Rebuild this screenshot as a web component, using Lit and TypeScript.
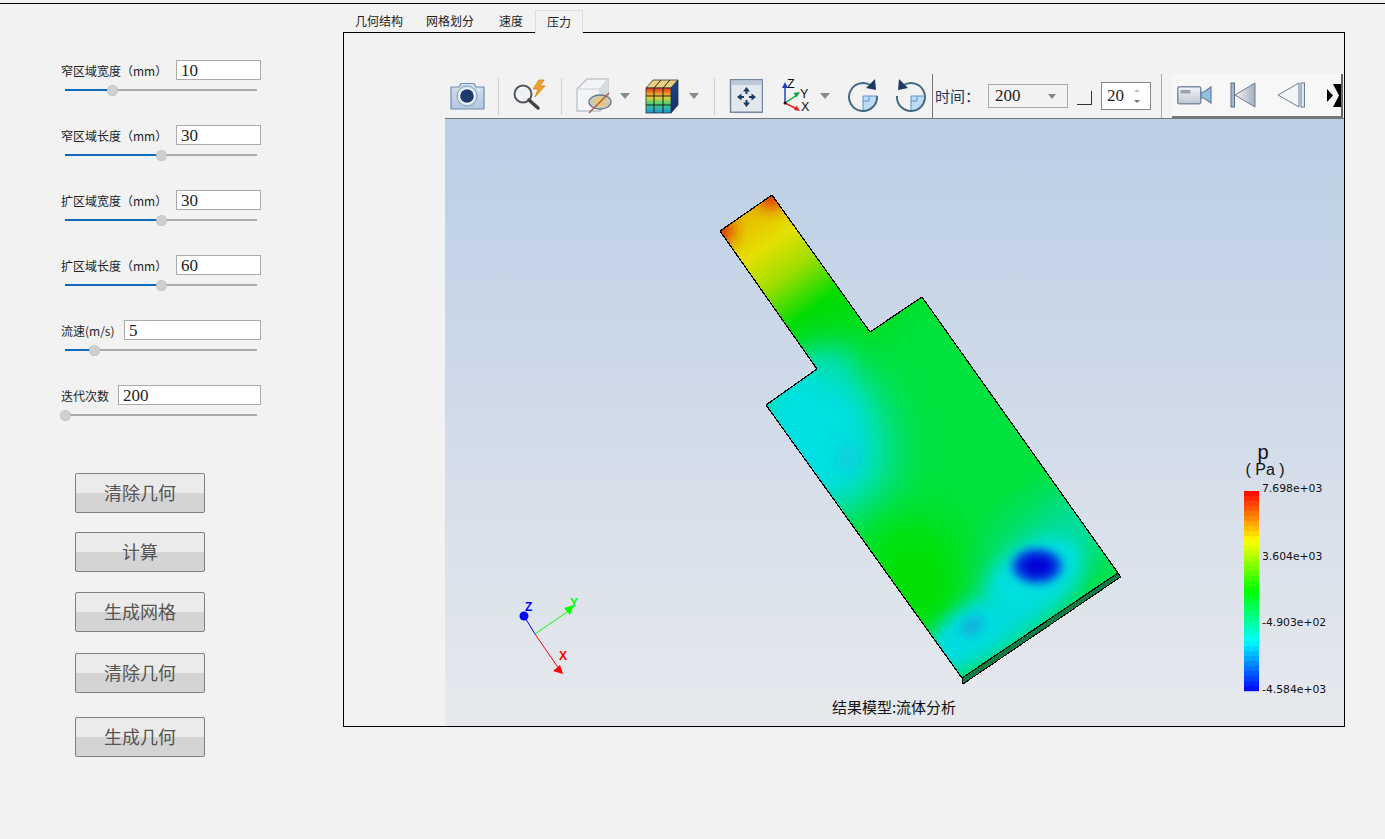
import { LitElement, html, css, svg } from 'lit';
import { customElement } from 'lit/decorators.js';

const rows = [
  { label: '窄区域宽度（mm）', labelW: 115, value: '10', pos: 24.5 },
  { label: '窄区域长度（mm）', labelW: 115, value: '30', pos: 50.5 },
  { label: '扩区域宽度（mm）', labelW: 115, value: '30', pos: 50.5 },
  { label: '扩区域长度（mm）', labelW: 115, value: '60', pos: 50.5 },
  { label: '流速(m/s)', labelW: 63, value: '5', pos: 15.6 },
  { label: '迭代次数', labelW: 57, value: '200', pos: 0.5 },
];

const buttons = ['清除几何', '计算', '生成网格', '清除几何', '生成几何'];
const tabs = ['几何结构', '网格划分', '速度', '压力'];

// outline of the model, in page pixels
const MODEL = '772,195 720,231 817,369 766,405 962,678 1118,573 922,297 870,332';

function rainbow(t: number) {
  const stops = [[255, 0, 0], [255, 255, 0], [0, 255, 0], [0, 255, 255], [0, 0, 255]];
  const p = Math.min(t * 4, 3.999);
  const i = Math.floor(p);
  const f = p - i;
  const c = stops[i].map((v, k) => Math.round(v + (stops[i + 1][k] - v) * f));
  return `rgb(${c[0]},${c[1]},${c[2]})`;
}

const bands = Array.from({ length: 40 }, (_, i) => i);

const ticks = [
  { text: '7.698e+03', y: 492 },
  { text: '3.604e+03', y: 560 },
  { text: '-4.903e+02', y: 626 },
  { text: '-4.584e+03', y: 693 },
];

const dropArrow = html`<svg class="drop" width="12" height="8" viewBox="0 0 12 8"><path d="M1 1h10L6 7z" fill="#8a8a8a" /></svg>`;

@customElement('app-root')
export class AppRoot extends LitElement {
  private renderRow(r: (typeof rows)[number]) {
    return html`
      <div class="row">
        <div class="field">
          <label style="width:${r.labelW}px">${r.label}</label>
          <input type="text" .value=${r.value} />
        </div>
        <div class="slider">
          <div class="fill" style="width:${r.pos}%"></div>
          <div class="thumb" style="left:${r.pos}%"></div>
        </div>
      </div>
    `;
  }

  private renderToolbar() {
    return html`
      <div class="toolbar">
        <svg class="i-cam" width="35" height="28" viewBox="0 0 35 28">
          <defs><linearGradient id="camg" x1="0" y1="0" x2="0" y2="1"><stop offset="0" stop-color="#d4e0ee" /><stop offset="1" stop-color="#b4c8e0" /></linearGradient></defs>
          <path d="M1 5h8l2-3.500h13l2 3.500h8v22h-33z" fill="url(#camg)" stroke="#6f8db2" stroke-width="1.200" stroke-linejoin="round" />
          <circle cx="17" cy="14" r="10" fill="#dfe8f2" stroke="#7f9abb" />
          <circle cx="17" cy="14" r="8" fill="#f2f6fa" />
          <circle cx="17" cy="14" r="6.800" fill="#1d3a6e" />
          <circle cx="29" cy="8" r="1" fill="#f4f7fb" />
        </svg>
        <span class="sep s1"></span>
        <svg class="i-mag" width="36" height="34" viewBox="0 0 36 34">
          <path d="M26 1l-6 9h5l-3 8 10-11h-5l4-6z" fill="#f0a030" stroke="#d98010" stroke-width=".8" />
          <circle cx="10" cy="15" r="8.500" fill="#eef2f6" stroke="#555" stroke-width="2" />
          <path d="M16 21l9 8" stroke="#444" stroke-width="3.500" stroke-linecap="round" />
        </svg>
        <span class="sep s2"></span>
        <svg class="i-cube" width="37" height="36" viewBox="0 0 37 36">
          <path d="M1 11L11 1h21v23L24 33H1z" fill="#f2f4f6" stroke="#c0c6cc" stroke-width="1.500" />
          <path d="M1 11h23v22M24 11l8-10" fill="none" stroke="#c8cdd2" stroke-width="1.200" />
          <path d="M32 1v23l-8 9V11z" fill="#d8dce0" />
          <ellipse cx="24" cy="24" rx="11" ry="7" fill="#c8ccc0" stroke="#6a7688" stroke-width="1.300" />
          <ellipse cx="24" cy="24" rx="6" ry="5" fill="#e8c878" />
          <path d="M13 35L33 15" stroke="#a8553a" stroke-width="1.300" />
        </svg>
        ${dropArrow}
        <svg class="i-rgb" width="34" height="35" viewBox="0 0 34 35">
          <defs>
            <linearGradient id="rgbf" x1="0" y1="0" x2="0" y2="1"><stop offset="0" stop-color="#e03020" /><stop offset=".35" stop-color="#f0d030" /><stop offset=".65" stop-color="#40d080" /><stop offset="1" stop-color="#2090e0" /></linearGradient>
            <linearGradient id="rgbs" x1="0" y1="0" x2="0" y2="1"><stop offset="0" stop-color="#104a90" /><stop offset="1" stop-color="#1c2c70" /></linearGradient>
          </defs>
          <path d="M1 9L8 1h25L26 9z" fill="#e8d080" stroke="#333" stroke-width=".8" />
          <path d="M26 9l7-8v25l-7 8z" fill="url(#rgbs)" stroke="#333" stroke-width=".8" />
          <rect x="1" y="9" width="25" height="25" fill="url(#rgbf)" stroke="#333" stroke-width=".8" />
          <path d="M9 9v25M18 9v25M1 17h25M1 26h25M9 9l7-8M18 9l7-8" stroke="#222" stroke-width="1" fill="none" />
        </svg>
        <svg class="drop d2" width="12" height="8" viewBox="0 0 12 8"><path d="M1 1h10L6 7z" fill="#8a8a8a" /></svg>
        <span class="sep s3"></span>
        <svg class="i-fit" width="34" height="34" viewBox="0 0 34 34">
          <rect x="1.500" y=".75" width="32" height="32.500" fill="#e3e7ee" stroke="#75869f" stroke-width="1.500" />
          <rect x="2.200" y="1.500" width="30.600" height="4.500" fill="#bcc8da" />
          <path d="M17.500 8l3.500 4.500h-2.500v2.500h-2v-2.500H14zM17.500 28l3.500-4.500h-2.500V21h-2v2.500H14zM8 18l4.500-3.500V17H15v2h-2.500v2.500zM27 18l-4.500-3.500V17H20v2h2.500v2.500z" fill="#1d3a62" />
        </svg>
        <svg class="i-axes" width="32" height="36" viewBox="0 0 32 36">
          <path d="M4 25V8" stroke="#2040c0" stroke-width="1.500" />
          <path d="M4 4l-3 6h6z" fill="#2040c0" />
          <path d="M4 25l12-8" stroke="#10a040" stroke-width="1.500" />
          <path d="M19 14l-6.500 1 3 4.500z" fill="#10a040" />
          <path d="M4 25l12 6" stroke="#e02020" stroke-width="1.500" />
          <path d="M19 33l-6-1 2.500-4.500z" fill="#e02020" />
          <circle cx="4" cy="25" r="1.500" fill="#111" />
          <text x="6" y="10" class="ax">Z</text>
          <text x="19" y="20" class="ax">Y</text>
          <text x="20" y="33" class="ax">X</text>
        </svg>
        ${dropArrow}
        <svg class="i-rot" width="32" height="34" viewBox="0 0 32 34">
          <path d="M16 17h14a14 14 0 0 1-14 14z" fill="#bcdcf4" />
          <path d="M24 6.500A14 14 0 1 0 30 17" fill="none" stroke="#446688" stroke-width="2" />
          <path d="M16 17h14M16 17v14M22 17v5h-6" fill="none" stroke="#5a94c8" stroke-width="1" />
          <path d="M28 0l1 11-10-2z" fill="#1d3a62" />
        </svg>
        <svg class="i-rot2" width="32" height="34" viewBox="0 0 32 34">
          <path d="M16 17h14a14 14 0 0 1-14 14z" fill="#bcdcf4" />
          <path d="M8 6.500A14 14 0 1 1 2 17" fill="none" stroke="#446688" stroke-width="2" />
          <path d="M16 17h14M16 17v14M22 17v5h-6" fill="none" stroke="#5a94c8" stroke-width="1" />
          <path d="M4 0l-1 11 10-2z" fill="#1d3a62" />
        </svg>
        <span class="sep dark"></span>
        <span class="time">时间：</span>
        <div class="combo"><span>200</span><svg width="8" height="5" viewBox="0 0 8 5"><path d="M0 0h8L4 5z" fill="#888" /></svg></div>
        <span class="check"></span>
        <div class="spin">
          <span>20</span>
          <svg width="8" height="16" viewBox="0 0 8 16"><path d="M1 4l3-3 3 3z" fill="#c4c4c4" /><path d="M1 12l3 3 3-3z" fill="#777" /></svg>
        </div>
        <span class="sep s4"></span>
        <div class="player">
          <svg class="p-video" width="36" height="20" viewBox="0 0 36 20">
            <defs><linearGradient id="vid" x1="0" y1="0" x2="0" y2="1"><stop offset="0" stop-color="#f4f5f7" /><stop offset="1" stop-color="#c0c8d2" /></linearGradient></defs>
            <rect x=".75" y="1.750" width="23" height="17" rx="2" fill="url(#vid)" stroke="#7c8da4" stroke-width="1.500" />
            <rect x="3.500" y="5" width="10" height="3.500" fill="#9ca2a8" />
            <path d="M24 7h3l7-5v16l-7-5h-3z" fill="#8cc4e0" stroke="#6a7c94" stroke-width="1.200" />
          </svg>
          <svg class="p-first" width="26" height="26" viewBox="0 0 26 26">
            <defs><linearGradient id="tri" x1="0" y1="0" x2="1" y2="0"><stop offset="0" stop-color="#f4f6f8" /><stop offset="1" stop-color="#a4afbc" /></linearGradient></defs>
            <rect x="1" y="1" width="3.500" height="24" fill="#a8b8cc" stroke="#5a6e8c" />
            <path d="M25 1v24L5 13z" fill="url(#tri)" stroke="#6a7c94" />
          </svg>
          <svg class="p-prev" width="29" height="26" viewBox="0 0 29 26">
            <path d="M22 1v24L1 13z" fill="#f2f4f6" stroke="#6a7c94" />
            <rect x="24" y="1" width="3.500" height="24" fill="#e0e6ee" stroke="#6a7c94" />
          </svg>
          <svg class="p-last" width="15" height="23" viewBox="0 0 15 23">
            <defs><filter id="soft"><feGaussianBlur stdDeviation=".7" /></filter></defs>
            <g filter="url(#soft)">
              <path d="M0 5l6 6.500L0 18z" fill="#000" />
              <path d="M6 0h8v23H6l6-11.500z" fill="#000" />
            </g>
          </svg>
        </div>
      </div>
    `;
  }

  private renderScene() {
    return svg`
      <svg class="scene" width="899" height="607" viewBox="445 119 899 607">
        <defs>
          <linearGradient id="bg" x1="0" y1="0" x2="0" y2="1">
            <stop offset="0" stop-color="#bbcee5" />
            <stop offset="1" stop-color="#e7e9ed" />
          </linearGradient>
          <linearGradient id="flow" gradientUnits="userSpaceOnUse" x1="746" y1="213" x2="871" y2="390">
            <stop offset="0" stop-color="#e6b800" />
            <stop offset=".18" stop-color="#e4e000" />
            <stop offset=".34" stop-color="#a0de00" />
            <stop offset=".54" stop-color="#00dc00" />
            <stop offset=".85" stop-color="#00e030" />
            <stop offset="1" stop-color="#00e23c" />
          </linearGradient>
          <clipPath id="body"><polygon points=${MODEL} /></clipPath>
          <filter id="b24" x="-50%" y="-50%" width="200%" height="200%"><feGaussianBlur stdDeviation="24" /></filter>
          <filter id="b14" x="-50%" y="-50%" width="200%" height="200%"><feGaussianBlur stdDeviation="14" /></filter>
          <filter id="b8" x="-50%" y="-50%" width="200%" height="200%"><feGaussianBlur stdDeviation="8" /></filter>
          <filter id="b5" x="-50%" y="-50%" width="200%" height="200%"><feGaussianBlur stdDeviation="5" /></filter>
        </defs>
        <rect x="445" y="119" width="899" height="607" fill="url(#bg)" />

        <polygon points="962,678 1118,573 1120.500,577 963,684" fill="#0e7e44" stroke="#000" stroke-width="1" shape-rendering="crispEdges" />
        <g clip-path="url(#body)">
          <rect x="700" y="180" width="440" height="520" fill="url(#flow)" />
          <ellipse cx="1000" cy="440" rx="60" ry="150" transform="rotate(-35 1000 440)" fill="#00e23c" filter="url(#b14)" />
          <circle cx="772" cy="195" r="13" fill="#e02000" filter="url(#b8)" />
          <circle cx="720" cy="231" r="13" fill="#e02000" filter="url(#b8)" />
          <ellipse cx="828" cy="438" rx="62" ry="84" transform="rotate(-18 828 438)" fill="#00e0c8" filter="url(#b24)" />
          <ellipse cx="812" cy="430" rx="50" ry="66" transform="rotate(-15 812 430)" fill="#00e0e0" filter="url(#b14)" />
          <ellipse cx="832" cy="372" rx="14" ry="22" fill="#00e0c0" filter="url(#b14)" />
          <ellipse cx="920" cy="580" rx="50" ry="68" transform="rotate(-30 920 580)" fill="#00e000" filter="url(#b24)" />
          <ellipse cx="1065" cy="535" rx="100" ry="32" transform="rotate(-35 1065 535)" fill="#00dcb0" filter="url(#b24)" />
          <ellipse cx="1000" cy="620" rx="30" ry="95" transform="rotate(55 1000 620)" fill="#00dcdc" filter="url(#b14)" />
          <ellipse cx="1035" cy="572" rx="50" ry="28" transform="rotate(-28 1035 572)" fill="#00e0e0" filter="url(#b8)" />
          <ellipse cx="968" cy="632" rx="38" ry="20" transform="rotate(-35 968 632)" fill="#00dce0" filter="url(#b8)" />
          <ellipse cx="848" cy="458" rx="11" ry="14" fill="#10cce0" filter="url(#b8)" />
          <ellipse cx="972" cy="626" rx="13" ry="9" transform="rotate(-35 972 626)" fill="#10b4dc" filter="url(#b5)" />
          <ellipse cx="1037" cy="566" rx="25" ry="17" fill="#0040e0" filter="url(#b5)" />
          <ellipse cx="1037" cy="566" rx="15" ry="10" fill="#0000d8" filter="url(#b5)" />
        </g>
        <polygon points=${MODEL} fill="none" stroke="#000" stroke-width="1.200" shape-rendering="crispEdges" />

        <path d="M535 634L524 616" stroke="#0000ff" />
        <path d="M535 634L570 610" stroke="#00ff00" />
        <path d="M535 634L559 669" stroke="#ff0000" />
        <circle cx="524" cy="616" r="4.500" fill="#0000ff" />
        <path d="M574 605l-4 10-6-7z" fill="#00ff00" />
        <path d="M563 674l-10-3 7-6z" fill="#ff0000" />
        <text x="525" y="611" class="tri" fill="#0000ff">Z</text>
        <text x="570" y="607" class="tri" fill="#00ff00">Y</text>
        <text x="559" y="660" class="tri" fill="#ff0000">X</text>

        <text x="1263" y="459" class="unit p" text-anchor="middle">p</text>
        <text x="1265" y="475" class="unit" text-anchor="middle">( Pa )</text>
        ${bands.map((i) => svg`<rect x="1244" y=${491 + i * 5} width="15" height="5.200" fill=${rainbow((i + 0.5) / bands.length)} />`)}
        ${ticks.map((t) => svg`<text x="1262" y=${t.y} class="tick">${t.text}</text>`)}
        <text x="894" y="713" class="caption" text-anchor="middle">结果模型:流体分析</text>
      </svg>
    `;
  }

  render() {
    return html`
      <div class="topline"></div>
      <div class="main">
        <aside class="side">
          ${rows.map((r) => this.renderRow(r))}
          <div class="actions">
            ${buttons.map((b) => html`<button>${b}</button>`)}
          </div>
        </aside>
        <section class="work">
          <div class="tabs">
            ${tabs.map((t, i) => html`<span class="tab ${i === 3 ? 'active' : ''}">${t}</span>`)}
          </div>
          <div class="frame">
            <div class="view">
              ${this.renderToolbar()}
              ${this.renderScene()}
            </div>
          </div>
        </section>
      </div>
    `;
  }

  static styles = css`
    :host {
      display: block;
      width: 1385px;
      height: 839px;
      overflow: hidden;
      background: #f2f2f2;
      font-family: "Liberation Sans", "Noto Sans CJK SC", sans-serif;
      color: #222;
    }
    .topline {
      margin-top: 3px;
      height: 1px;
      background: #000;
    }
    .main {
      display: flex;
    }
    .side {
      width: 343px;
      box-sizing: border-box;
      padding: 56px 0 0 61px;
    }
    .row {
      width: 200px;
      height: 65px;
    }
    .field {
      display: flex;
      align-items: center;
      height: 20px;
    }
    label {
      flex: none;
      font: 12px "Noto Sans CJK SC", sans-serif;
      white-space: nowrap;
    }
    input {
      flex: 1;
      min-width: 0;
      height: 20px;
      box-sizing: border-box;
      border: 1px solid #aaa;
      background: #fff;
      padding: 1px 4px 0;
      font: 17px "Liberation Serif", serif;
      color: #222;
      outline: none;
    }
    .slider {
      position: relative;
      margin: 9px 0 0 4px;
      width: 192px;
      height: 2px;
      background: #aaa;
    }
    .fill {
      height: 2px;
      background: #1068b8;
    }
    .thumb {
      position: absolute;
      top: -4.5px;
      width: 11px;
      height: 11px;
      box-sizing: border-box;
      margin-left: -5.5px;
      border: 1px dotted #b4b4b4;
      border-radius: 50%;
      background: #d0d0d0;
    }
    .actions {
      display: flex;
      flex-direction: column;
      align-items: flex-start;
      padding: 23px 0 0 14px;
    }
    button {
      width: 130px;
      height: 40px;
      padding: 0 0 3px;
      border: 1px solid #808080;
      border-radius: 2px;
      background: linear-gradient(#ebebeb 50%, #d4d4d4 50%);
      font: 18px "Noto Sans CJK SC", sans-serif;
      color: #555;
    }
    button:nth-child(1) { margin-bottom: 19px; }
    button:nth-child(2) { margin-bottom: 20px; }
    button:nth-child(3) { margin-bottom: 21px; }
    button:nth-child(4) { margin-bottom: 24px; }
    .work {
      width: 1002px;
      padding-top: 6px;
    }
    .tabs {
      display: flex;
      height: 22px;
      padding-left: 1px;
      font-family: "Noto Sans CJK SC", sans-serif;
      font-size: 12px;
    }
    .tab {
      box-sizing: border-box;
      height: 22px;
      line-height: 22px;
      padding: 0 11px;
      margin-right: 1px;
    }
    .tab:nth-child(3) {
      margin-left: 2px;
    }
    .tab.active {
      position: relative;
      z-index: 1;
      height: 23px;
      padding: 0 11px 1px;
      border: 1px solid #dcdcdc;
      border-bottom: none;
      background: #f2f2f2;
    }
    .frame {
      box-sizing: border-box;
      height: 695px;
      border: 1px solid #000;
      padding: 41px 0 0 101px;
    }
    .view {
      width: 899px;
    }
    .toolbar {
      display: flex;
      align-items: center;
      box-sizing: border-box;
      height: 45px;
      border-bottom: 1px solid #777;
      background: #f2f2f2;
    }
    .toolbar svg {
      flex: none;
    }
    .sep {
      flex: none;
      width: 1px;
      height: 37px;
      background: #cfcfcf;
    }
    .i-cam { margin-left: 5px; }
    .s1 { margin-left: 13px; }
    .i-mag { margin-left: 14px; }
    .s2 { margin-left: 12px; }
    .i-cube { margin-left: 14px; }
    .drop { margin-left: 6px; }
    .drop.d2 { margin-left: 9px; }
    .i-rgb { margin-left: 14px; }
    .s3 { margin-left: 14px; }
    .i-fit { margin-left: 14px; }
    .i-axes { margin-left: 18px; }
    .i-rot { margin-left: 16px; }
    .i-rot2 { margin-left: 16px; }
    .sep.dark {
      margin-left: 5px;
      height: 44px;
      align-self: flex-start;
      background: #777;
    }
    .ax {
      font: 12.500px "Liberation Sans", sans-serif;
      fill: #111;
    }
    .time {
      flex: none;
      width: 53px;
      margin: 0 0 2px 2px;
      font-size: 15px;
      font-family: "Noto Sans CJK SC", sans-serif;
      color: #1f3a5c;
    }
    .combo {
      flex: none;
      display: flex;
      align-items: center;
      justify-content: space-between;
      box-sizing: border-box;
      width: 80px;
      height: 24px;
      padding: 0 11px 0 6px;
      border: 1px solid #aaa;
      font: 17px "Liberation Serif", serif;
    }
    .check {
      flex: none;
      box-sizing: border-box;
      width: 15px;
      height: 14px;
      margin: 4px 0 0 9px;
      border-right: 1px solid #333;
      border-bottom: 1px solid #333;
      background: #f2f2f2;
    }
    .spin {
      flex: none;
      display: flex;
      align-items: center;
      justify-content: space-between;
      box-sizing: border-box;
      width: 50px;
      height: 28px;
      margin-left: 9px;
      padding: 0 9px 0 5px;
      border: 1px solid #888;
      background: #fff;
      font: 17px "Liberation Serif", serif;
    }
    .sep.s4 {
      margin-left: 10px;
      height: 44px;
      align-self: flex-start;
      background: #aaa;
    }
    .player {
      flex: none;
      display: flex;
      align-items: center;
      box-sizing: border-box;
      align-self: flex-start;
      width: 171px;
      height: 44px;
      margin-left: 10px;
      padding-left: 5px;
      background: #f7f7f7;
      border-right: 2px solid #666;
      border-bottom: 2px solid #777;
    }
    .p-first { margin-left: 17px; }
    .p-prev { margin-left: 21px; }
    .p-last { margin-left: 21px; }
    .scene {
      display: block;
    }
    .tri {
      font: bold 12px "Liberation Sans", sans-serif;
    }
    .unit {
      font: 16px "Liberation Sans", sans-serif;
      fill: #111;
    }
    .unit.p {
      font-size: 20px;
    }
    .tick {
      font: 10.800px "DejaVu Sans", sans-serif;
      fill: #111;
    }
    .caption {
      font: 15px "Noto Sans CJK SC", sans-serif;
      fill: #111;
    }
  `;
}
